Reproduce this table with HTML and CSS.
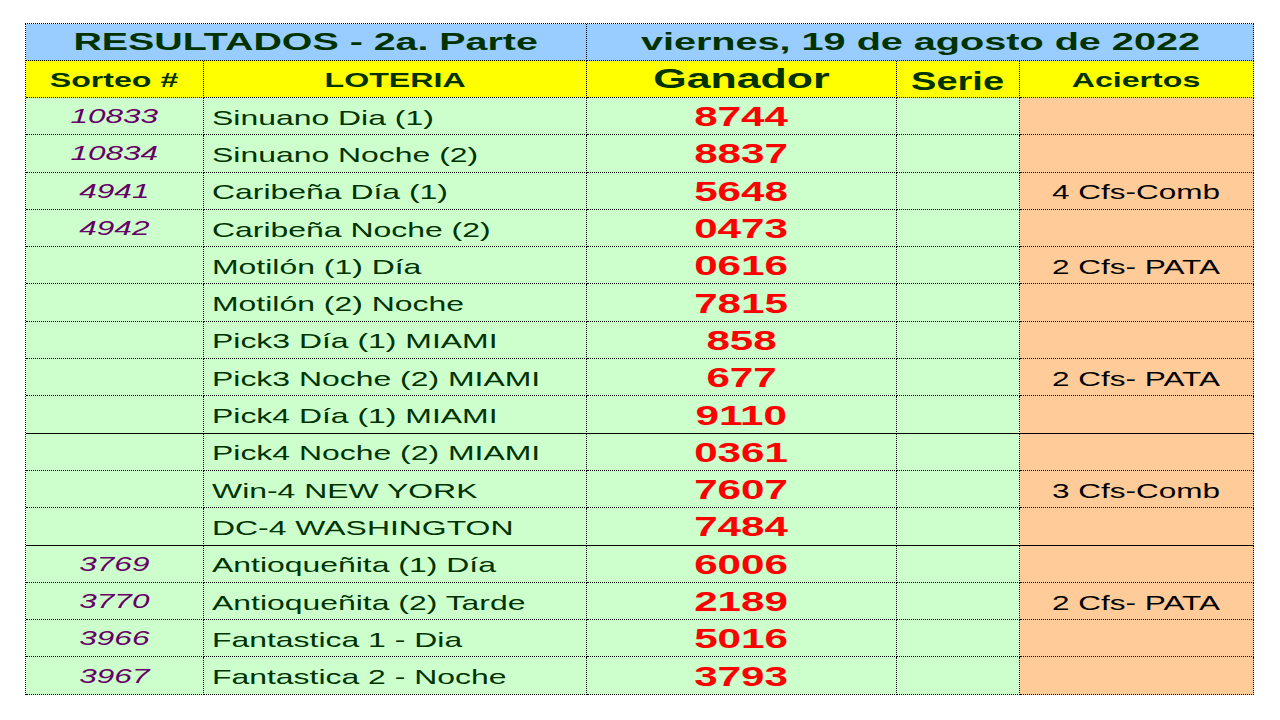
FILE: index.html
```html
<!DOCTYPE html>
<html lang="es">
<head>
<meta charset="utf-8">
<title>Resultados - 2a. Parte</title>
<link rel="stylesheet" href="styles.css">
</head>
<body>
<div class="sheet">
  <div class="c banner span2"><span class="x title">RESULTADOS - 2a. Parte</span></div>
  <div class="c banner span3"><span class="x date">viernes, 19 de agosto de 2022</span></div>

  <div class="c head"><span class="x h-sm">Sorteo #</span></div>
  <div class="c head"><span class="x h-sm">LOTERIA</span></div>
  <div class="c head"><span class="x h-lg">Ganador</span></div>
  <div class="c head"><span class="x h-md">Serie</span></div>
  <div class="c head"><span class="x h-sm">Aciertos</span></div>

  <div class="c"><span class="x num">10833</span></div>
  <div class="c name"><span class="x nm">Sinuano Dia (1)</span></div>
  <div class="c"><span class="x win">8744</span></div>
  <div class="c"></div>
  <div class="c ac"></div>

  <div class="c"><span class="x num">10834</span></div>
  <div class="c name"><span class="x nm">Sinuano Noche (2)</span></div>
  <div class="c"><span class="x win">8837</span></div>
  <div class="c"></div>
  <div class="c ac"></div>

  <div class="c"><span class="x num">4941</span></div>
  <div class="c name"><span class="x nm">Caribeña Día (1)</span></div>
  <div class="c"><span class="x win">5648</span></div>
  <div class="c"></div>
  <div class="c ac"><span class="x hit">4 Cfs-Comb</span></div>

  <div class="c"><span class="x num">4942</span></div>
  <div class="c name"><span class="x nm">Caribeña Noche (2)</span></div>
  <div class="c"><span class="x win">0473</span></div>
  <div class="c"></div>
  <div class="c ac"></div>

  <div class="c"></div>
  <div class="c name"><span class="x nm">Motilón (1) Día</span></div>
  <div class="c"><span class="x win">0616</span></div>
  <div class="c"></div>
  <div class="c ac"><span class="x hit">2 Cfs- PATA</span></div>

  <div class="c"></div>
  <div class="c name"><span class="x nm">Motilón (2) Noche</span></div>
  <div class="c"><span class="x win">7815</span></div>
  <div class="c"></div>
  <div class="c ac"></div>

  <div class="c"></div>
  <div class="c name"><span class="x nm">Pick3 Día (1) MIAMI</span></div>
  <div class="c"><span class="x win">858</span></div>
  <div class="c"></div>
  <div class="c ac"></div>

  <div class="c"></div>
  <div class="c name"><span class="x nm">Pick3 Noche (2) MIAMI</span></div>
  <div class="c"><span class="x win">677</span></div>
  <div class="c"></div>
  <div class="c ac"><span class="x hit">2 Cfs- PATA</span></div>

  <div class="c sep"></div>
  <div class="c name sep"><span class="x nm">Pick4 Día (1) MIAMI</span></div>
  <div class="c sep"><span class="x win">9110</span></div>
  <div class="c sep"></div>
  <div class="c ac sep"></div>

  <div class="c"></div>
  <div class="c name"><span class="x nm">Pick4 Noche (2) MIAMI</span></div>
  <div class="c"><span class="x win">0361</span></div>
  <div class="c"></div>
  <div class="c ac"></div>

  <div class="c"></div>
  <div class="c name"><span class="x nm">Win-4 NEW YORK</span></div>
  <div class="c"><span class="x win">7607</span></div>
  <div class="c"></div>
  <div class="c ac"><span class="x hit">3 Cfs-Comb</span></div>

  <div class="c sep"></div>
  <div class="c name sep"><span class="x nm">DC-4 WASHINGTON</span></div>
  <div class="c sep"><span class="x win">7484</span></div>
  <div class="c sep"></div>
  <div class="c ac sep"></div>

  <div class="c"><span class="x num">3769</span></div>
  <div class="c name"><span class="x nm">Antioqueñita (1) Día</span></div>
  <div class="c"><span class="x win">6006</span></div>
  <div class="c"></div>
  <div class="c ac"></div>

  <div class="c"><span class="x num">3770</span></div>
  <div class="c name"><span class="x nm">Antioqueñita (2) Tarde</span></div>
  <div class="c"><span class="x win">2189</span></div>
  <div class="c"></div>
  <div class="c ac"><span class="x hit">2 Cfs- PATA</span></div>

  <div class="c"><span class="x num">3966</span></div>
  <div class="c name"><span class="x nm">Fantastica 1 - Dia</span></div>
  <div class="c"><span class="x win">5016</span></div>
  <div class="c"></div>
  <div class="c ac"></div>

  <div class="c"><span class="x num">3967</span></div>
  <div class="c name"><span class="x nm">Fantastica 2 - Noche</span></div>
  <div class="c"><span class="x win">3793</span></div>
  <div class="c"></div>
  <div class="c ac"></div>
</div>
</body>
</html>
```

FILE: styles.css
```css
html, body {
  margin: 0;
  padding: 0;
  background: #ffffff;
}

body {
  font-family: "Liberation Sans", Arial, sans-serif;
  color: #003300;
}

.sheet {
  margin: 23px 0 0 25px;
  display: grid;
  grid-template-columns: 178px 383px 310px 123px 234px;
  grid-template-rows: 37px 37px;
  grid-auto-rows: 37.3px;
  width: max-content;
  border-top: 1px dotted #000;
  border-left: 1px dotted #000;
}

.c {
  box-sizing: border-box;
  display: flex;
  align-items: center;
  justify-content: center;
  padding-top: 2px;
  background: #ccffcc;
  border-right: 1px dotted #000;
  border-bottom: 1px dotted #000;
  white-space: nowrap;
  overflow: visible;
  min-width: 0;
}

.c.sep {
  border-bottom: 1px solid #000;
}

.c.ac {
  background: #ffcc99;
}

.c.name {
  justify-content: flex-start;
  padding-left: 8px;
}

.banner {
  background: #99ccff;
  padding-top: 0;
}

.span2 { grid-column: span 2; }
.span3 { grid-column: span 3; }

.head {
  background: #ffff00;
  padding-top: 0;
}

.x {
  display: inline-block;
  transform: scaleX(1.5);
  transform-origin: center center;
  line-height: 1;
}

.name .x {
  transform-origin: left center;
}

.title {
  font-weight: bold;
  font-size: 24px;
  transform: scaleX(1.64);
}

.date {
  font-weight: bold;
  font-size: 24px;
  transform: scaleX(1.65);
}

.h-sm {
  font-weight: bold;
  font-size: 21px;
  transform: scaleX(1.53);
}

.h-lg {
  font-weight: bold;
  font-size: 27px;
  transform: scaleX(1.59);
  padding-top: 1px;
}

.h-md {
  font-weight: bold;
  font-size: 25px;
  transform: scaleX(1.52);
  padding-top: 4px;
}

.num {
  font-style: italic;
  font-size: 21px;
  color: #660066;
  transform: scaleX(1.5);
  margin-top: -3px;
}

.nm {
  font-size: 21px;
  color: #003300;
  transform: scaleX(1.52);
}

.win {
  font-weight: bold;
  font-size: 27px;
  color: #ff0000;
  transform: scaleX(1.56);
  margin-top: 1px;
}

.hit {
  font-size: 21px;
  color: #000000;
  transform: scaleX(1.5);
}
```
